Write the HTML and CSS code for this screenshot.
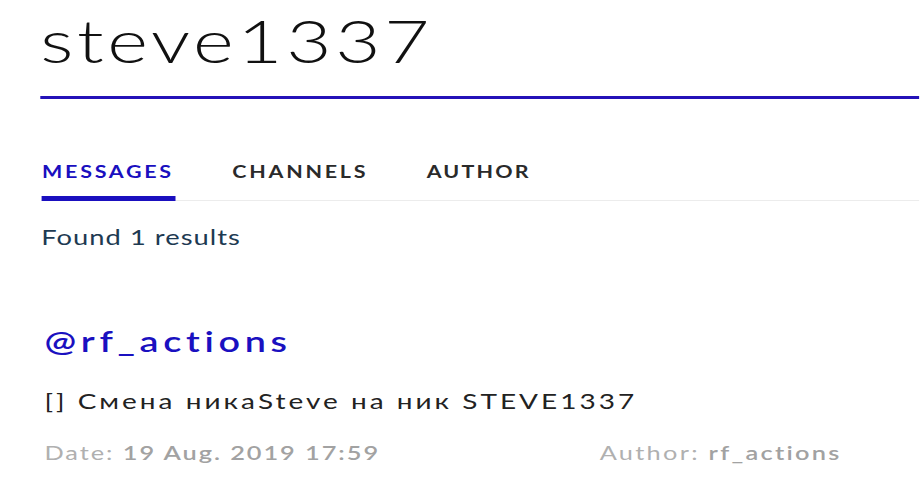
FILE: index.html
```html
<!DOCTYPE html>
<html lang="en">
<head>
<meta charset="utf-8">
<title>steve1337</title>
<link rel="stylesheet" href="styles.css">
</head>
<body>
<div class="page">
  <h1 class="title">steve1337</h1>
  <nav class="tabs">
    <a class="tab active" href="#">MESSAGES</a>
    <a class="tab" href="#">CHANNELS</a>
    <a class="tab" href="#">AUTHOR</a>
  </nav>
  <p class="found">Found 1 results</p>
  <div class="result">
    <div class="channel">@rf_actions</div>
    <div class="message">[] Смена никаSteve на ник STEVE1337</div>
    <div class="meta">
      <span class="meta-item">Date: <b>19 Aug. 2019 17:59</b></span>
      <span class="meta-item">Author: <b>rf_actions</b></span>
    </div>
  </div>
</div>
</body>
</html>
```
FILE: styles.css
```css
html, body {
  margin: 0;
  padding: 0;
  background: #ffffff;
}
body {
  font-family: Lato, "Noto Sans", sans-serif;
  overflow: hidden;
}
.page {
  width: 675.7px;
  padding-left: 31.7px;
  transform: scaleX(1.3);
  transform-origin: 0 0;
}
.title {
  margin: 0 0 0 -0.8px;
  padding: 4px 0 20px;
  font-size: 60px;
  line-height: 72px;
  font-weight: 300;
  letter-spacing: 2.85px;
  color: #111111;
  border-bottom: 3px solid #2412b8;
}
.tabs {
  display: flex;
  gap: 43.5px;
  margin-left: 0.7px;
  padding-top: 62.6px;
  border-bottom: 1px solid #ececec;
}
.tab {
  display: block;
  font-size: 16.5px;
  line-height: 20px;
  font-weight: 700;
  letter-spacing: 2.1px;
  color: #2a2a2a;
  text-decoration: none;
  padding-bottom: 14.4px;
  padding-right: 1.5px;
  border-bottom: 5px solid transparent;
  margin-bottom: -1px;
}
.tab:last-child {
  letter-spacing: 1.7px;
}
.tab.active {
  color: #1a0fbf;
  border-bottom-color: #1a0fbf;
}
.found {
  margin: 23px 0 0;
  font-size: 21px;
  line-height: 26px;
  letter-spacing: 0.8px;
  color: #1d3a52;
}
.result {
  padding-left: 2.5px;
  margin-top: 73.8px;
}
.channel {
  font-size: 29px;
  line-height: 34px;
  font-weight: 600;
  letter-spacing: 3.6px;
  color: #1a10c0;
}
.message {
  margin-top: 30.2px;
  font-size: 21.5px;
  line-height: 26px;
  letter-spacing: 2.32px;
  color: #222222;
}
.meta {
  display: flex;
  justify-content: space-between;
  margin-top: 27px;
  padding-right: 60px;
  font-size: 19.5px;
  line-height: 24px;
  letter-spacing: 1.5px;
  color: #b0b0b0;
}
.meta-item b {
  font-weight: 600;
  color: #a2a2a2;
}
.meta-item + .meta-item {
  letter-spacing: 1.75px;
}
```
